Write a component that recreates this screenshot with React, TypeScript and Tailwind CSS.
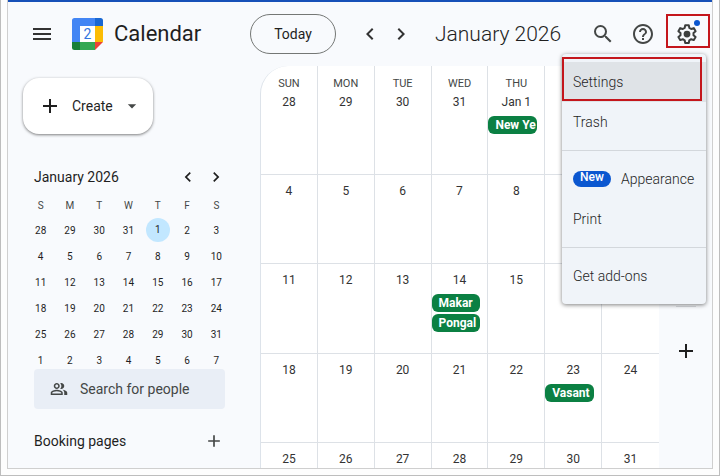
import React, { useState } from 'react';
import {
  MdAdd,
  MdArrowDropDown,
  MdChevronLeft,
  MdChevronRight,
  MdHelpOutline,
  MdMenu,
  MdOutlinePeopleAlt,
  MdSearch,
} from 'react-icons/md';

const DAYS = ['SUN', 'MON', 'TUE', 'WED', 'THU', 'FRI', 'SAT'];

const WEEKS = [
  ['28', '29', '30', '31', 'Jan 1', '2', '3'],
  ['4', '5', '6', '7', '8', '9', '10'],
  ['11', '12', '13', '14', '15', '16', '17'],
  ['18', '19', '20', '21', '22', '23', '24'],
  ['25', '26', '27', '28', '29', '30', '31'],
];

const EVENTS: Record<string, string[]> = {
  'Jan 1': ['New Ye'],
  '14': ['Makar', 'Pongal'],
  '23': ['Vasant'],
};

const MINI_WEEKS = [
  [28, 29, 30, 31, 1, 2, 3],
  [4, 5, 6, 7, 8, 9, 10],
  [11, 12, 13, 14, 15, 16, 17],
  [18, 19, 20, 21, 22, 23, 24],
  [25, 26, 27, 28, 29, 30, 31],
  [1, 2, 3, 4, 5, 6, 7],
];

const Logo: React.FC = () => (
  <svg className="w-8 h-8" viewBox="0 0 32 32" aria-hidden="true">
    <path d="M2.500 0H24v8H8v16H0V2.500A2.500 2.500 0 0 1 2.500 0z" fill="#4285f4" />
    <path d="M23 0h5.500A2.500 2.500 0 0 1 31 2.500V8h-8z" fill="#1967d2" />
    <path d="M23 8h8v16h-8z" fill="#fbbc04" />
    <path d="M8 24h15v8H8z" fill="#34a853" />
    <path d="M0 24h8v8H2.500A2.500 2.500 0 0 1 0 29.500z" fill="#188038" />
    <path d="M23 24h8l-8 8z" fill="#ea4335" />
    <path d="M8 8h15v16H8z" fill="#fff" />
    <text x="15.500" y="21" textAnchor="middle" fontSize="14" fontFamily="Roboto, sans-serif" fill="#3376e0">2</text>
  </svg>
);

const GearIcon: React.FC = () => (
  <svg className="w-6 h-6 text-[#3c3f3e]" viewBox="0 0 24 24" aria-hidden="true">
    <path
      d="M10.200 3.200h3.600l.5 2.700 1.900 1.100 2.600-.9 1.800 3.100-2.100 1.800v2.200l2.100 1.800-1.800 3.100-2.600-.9-1.900 1.100-.5 2.700h-3.600l-.5-2.700-1.900-1.100-2.600.9L3.400 15l2.100-1.800V11L3.400 9.200l1.800-3.100 2.600.9 1.900-1.100z"
      fill="none"
      stroke="currentColor"
      strokeWidth="2"
      strokeLinejoin="round"
    />
    <circle cx="12" cy="12.100" r="3.400" fill="currentColor" />
  </svg>
);

const SettingsMenu: React.FC = () => {
  const item = 'flex items-center w-full h-10 px-[11px] text-left whitespace-nowrap';
  return (
    <div
      role="menu"
      className="absolute right-1 top-10 z-20 w-36 py-2 rounded bg-[#f0f4f9] text-sm font-light text-[#1f1f1f] shadow-[0_1px_4px_rgba(0,0,0,0.5)]"
    >
      <button role="menuitem" className={`${item} bg-[#dfe3e7]`}>Settings</button>
      <button role="menuitem" className={item}>Trash</button>
      <hr className="my-2 border-[#d3d7dc]" />
      <button role="menuitem" className={item}>
        <span className="mr-[10px] h-4 w-[38px] rounded-full bg-[#0b57d0] text-center text-xs leading-3 font-medium text-white">New</span>
        Appearance
      </button>
      <button role="menuitem" className={item}>Print</button>
      <hr className="my-2 border-[#d3d7dc]" />
      <button role="menuitem" className={item}>Get add-ons</button>
      {/* highlight frame over the first entry */}
      <div className="absolute left-0 right-1 top-[3px] h-11 border-2 border-[#c4161c] pointer-events-none" />
    </div>
  );
};

const Header: React.FC<{ open: boolean; onToggle: () => void }> = ({ open, onToggle }) => (
  <header className="flex items-center h-16 text-[#1f1f1f]">
    <div className="flex items-center w-[242px] shrink-0 pl-[22px]">
      <button aria-label="Main menu"><MdMenu className="w-6 h-6 text-[#333]" /></button>
      <div className="flex items-center gap-[10px] ml-[18px]">
        <Logo />
        <h1 className="text-[22px] leading-7">Calendar</h1>
      </div>
    </div>
    <button className="h-10 w-[86px] shrink-0 rounded-full border border-[#747775] text-sm">Today</button>
    <div className="flex items-center gap-[7px] ml-[22px]">
      <button aria-label="Previous month"><MdChevronLeft className="w-6 h-6 text-[#333]" /></button>
      <button aria-label="Next month"><MdChevronRight className="w-6 h-6 text-[#333]" /></button>
    </div>
    <h2 className="ml-[22px] text-[21px] leading-7 font-light whitespace-nowrap">January 2026</h2>
    <div className="flex items-center h-full ml-auto mr-[2px]">
      <button aria-label="Search" className="mr-4"><MdSearch className="w-6 h-6 text-[#444746]" /></button>
      <button aria-label="Support" className="mr-[11px]"><MdHelpOutline className="w-6 h-6 text-[#444746]" /></button>
      <div className="relative self-start mt-3">
        <button
          aria-label="Settings menu"
          aria-expanded={open}
          onClick={onToggle}
          className="flex items-center justify-center w-11 h-[34px] pr-[2px] pt-[6px] border-2 border-[#c4161c]"
        >
          <GearIcon />
        </button>
        <span className="absolute right-[10px] top-[6px] w-[6px] h-[6px] rounded-full bg-[#0b57d0]" />
        {open && <SettingsMenu />}
      </div>
    </div>
  </header>
);

const MiniCalendar: React.FC = () => (
  <section className="mt-[27px]">
    <div className="flex items-center h-8 pl-[26px] pr-[34px] text-[#1f1f1f]">
      <h3 className="text-sm">January 2026</h3>
      <button aria-label="Previous" className="ml-auto"><MdChevronLeft className="w-5 h-5" /></button>
      <button aria-label="Next" className="ml-2"><MdChevronRight className="w-5 h-5" /></button>
    </div>
    <table className="table-fixed w-[205px] ml-[18px] text-center text-[10px] text-[#1f1f1f]">
      <thead>
        <tr className="h-6">
          {['S', 'M', 'T', 'W', 'T', 'F', 'S'].map((d, i) => (
            <th key={i} className="p-0 font-normal text-[#444746]">{d}</th>
          ))}
        </tr>
      </thead>
      <tbody>
        {MINI_WEEKS.map((week, w) => (
          <tr key={w} className="h-[26px]">
            {week.map((day, i) => (
              <td key={i} className="p-0">
                <span className={w === 0 && day === 1 ? 'inline-block w-6 h-6 leading-6 rounded-full bg-[#c2e7ff]' : ''}>{day}</span>
              </td>
            ))}
          </tr>
        ))}
      </tbody>
    </table>
  </section>
);

const Sidebar: React.FC = () => (
  <aside className="w-[252px] shrink-0 pt-3">
    <button className="flex items-center w-[130px] h-14 ml-[15px] pl-[15px] rounded-2xl bg-white text-sm text-[#1f1f1f] shadow-[0_1px_3px_rgba(0,0,0,0.5)]">
      <MdAdd className="w-6 h-6" />
      <span className="ml-[10px]">Create</span>
      <MdArrowDropDown className="w-5 h-5 ml-[9px] text-[#444746]" />
    </button>
    <MiniCalendar />
    <label className="relative flex items-center gap-3 h-10 -mt-1 ml-[26px] mr-[35px] pl-4 rounded bg-[#e9eef6]">
      <MdOutlinePeopleAlt className="w-[18px] h-[18px] shrink-0 text-[#444746]" />
      <input
        type="text"
        aria-label="Search for people"
        placeholder="Search for people"
        className="w-full min-w-0 bg-transparent text-sm outline-none placeholder:text-[#444746]"
      />
    </label>
    <div className="flex items-center h-10 mt-3 pl-[26px] pr-9 text-sm text-[#1f1f1f]">
      <h3>Booking pages</h3>
      <button aria-label="Create a booking page" className="ml-auto"><MdAdd className="w-5 h-5 text-[#444746]" /></button>
    </div>
  </aside>
);

const MonthGrid: React.FC = () => (
  <main className="grid grid-cols-7 grid-rows-[109px_89px_90px_89px_auto] flex-1 min-w-0 overflow-hidden rounded-tl-[28px] border-l border-[#dde3ea] bg-white">
    {WEEKS.map((week, w) =>
      week.map((day, i) => (
        <div
          key={`${w}-${i}`}
          className={`min-w-0 pt-2 text-center border-[#dde1e6] ${i < 6 ? 'border-r' : ''} ${w < 4 ? 'border-b' : ''}`}
        >
          {w === 0 && <div className="text-[11px] leading-5 text-[#444746]">{DAYS[i]}</div>}
          <div className="text-xs leading-4 text-[#333]">{day}</div>
          {EVENTS[day] && (
            <div className="flex flex-col gap-[2px] mt-[6px] mr-[7px]">
              {EVENTS[day].map((event) => (
                <button key={event} className="h-[18px] pl-[7px] rounded-md bg-[#0b8043] text-left text-xs leading-[18px] font-bold whitespace-nowrap text-white">
                  {event}
                </button>
              ))}
            </div>
          )}
        </div>
      ))
    )}
  </main>
);

const App: React.FC = () => {
  const [menuOpen, setMenuOpen] = useState(true);

  return (
    <div className="flex flex-col min-h-screen px-[6px] pb-[6px] border-x border-b border-[#bdbdbd] bg-[#fdfdfd] font-['Roboto',sans-serif]">
      <div className="flex flex-col flex-1 border-x border-b border-[#cfcfcf] bg-[#f8fafd]">
        <div className="h-[2px] bg-[#1650b8]" />
        <Header open={menuOpen} onToggle={() => setMenuOpen(!menuOpen)} />
        <div className="flex flex-1">
          <Sidebar />
          <MonthGrid />
          <aside className="flex flex-col items-center w-[53px] shrink-0 pt-60">
            <div className="w-5 border-t border-[#dadce0]" />
            <button aria-label="Get add-ons" className="mt-8"><MdAdd className="w-6 h-6 text-[#1f1f1f]" /></button>
          </aside>
        </div>
      </div>
    </div>
  );
};

export default App;
